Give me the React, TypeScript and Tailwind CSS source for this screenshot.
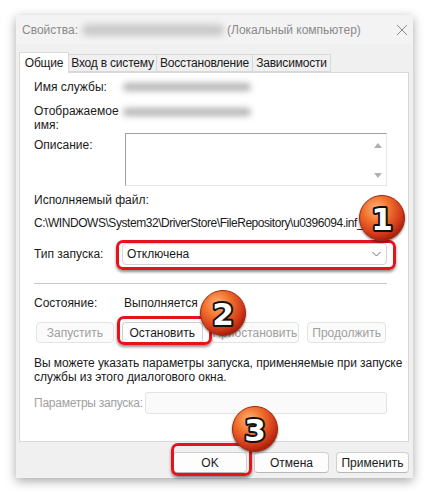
import React from "react";

const font = { fontFamily: '"Liberation Sans", Arial, sans-serif' };

function Blur({ w, className = "" }: { w: string; className?: string }) {
  return <div className={`h-[8px] rounded-full bg-[#b4b4b4] blur-[3px] ${w} ${className}`} />;
}

function Badge({ n, x, y }: { n: string; x: number; y: number }) {
  return (
    <svg
      width="52"
      height="52"
      viewBox="0 0 52 52"
      className="absolute"
      style={{ left: x - 26, top: y - 26 }}
    >
      <defs>
        <radialGradient id={`g${n}`} cx="38%" cy="30%" r="70%">
          <stop offset="0%" stopColor="#fcb680" />
          <stop offset="40%" stopColor="#f2742f" />
          <stop offset="80%" stopColor="#d3391a" />
          <stop offset="100%" stopColor="#a8220c" />
        </radialGradient>
        <filter id={`s${n}`} x="-20%" y="-20%" width="140%" height="140%">
          <feDropShadow dx="0" dy="1.5" stdDeviation="1.2" floodColor="#000" floodOpacity="0.45" />
        </filter>
      </defs>
      <circle cx="26" cy="26" r="22.5" fill={`url(#g${n})`} stroke="#9c2a12" strokeWidth="1" filter={`url(#s${n})`} />
      <text
        x="26"
        y="37.5"
        textAnchor="middle"
        fontFamily='"DejaVu Sans", sans-serif'
        fontWeight="bold"
        fontSize="31"
        fill="#fff"
        stroke="#111"
        strokeWidth="4"
        strokeLinejoin="round"
        paintOrder="stroke"
      >
        {n}
      </text>
    </svg>
  );
}

function Btn({ label, disabled, w }: { label: string; disabled?: boolean; w: string }) {
  return (
    <div
      className={`flex h-[21px] items-center justify-center whitespace-nowrap rounded-[4px] border text-[12px] ${w} ${
        disabled
          ? "border-[#e3e3e3] bg-[#fbfbfb] text-[#a0a0a0]"
          : "border-[#d0d0d0] border-b-[#b8b8b8] bg-[#fdfdfd] text-[#1a1a1a]"
      }`}
    >
      {label}
    </div>
  );
}

export default function App() {
  return (
    <div className="relative h-[494px] w-[431px] overflow-hidden whitespace-nowrap bg-white text-[12px] leading-[14px] text-[#1a1a1a]" style={font}>
      <div className="ml-[16px] mt-[15px] h-[463px] w-[397px] bg-[#f0f0f0] shadow-[0_3px_10px_rgba(0,0,0,0.35)]">
        {/* Title bar */}
        <div className="flex h-[29px] items-center bg-[#f3f3f3] pl-[6px] pr-[5px] text-[#8a8a8a]">
          <span>Свойства:</span>
          <Blur w="w-[142px]" className="ml-[4px] mr-[3px] h-[12px] bg-[#cacaca]" />
          <span>(Локальный компьютер)</span>
          <svg className="ml-auto" width="12" height="12" viewBox="0 0 12 12">
            <path d="M1 1 L11 11 M11 1 L1 11" stroke="#8c8c8c" strokeWidth="1" />
          </svg>
        </div>

        <div className="pl-[3px] pr-[4px]">
          {/* Tabs */}
          <div className="mt-[8px] flex h-[20px] items-end tracking-[-0.2px]">
            <div className="relative z-10 -mb-px flex h-[21px] w-[50px] items-center justify-center border border-b-0 border-[#d9d9d9] bg-white">
              Общие
            </div>
            <div className="flex h-[18px] w-[88px] items-center justify-center border border-l-0 border-[#d9d9d9] bg-[#f0f0f0]">
              Вход в систему
            </div>
            <div className="flex h-[18px] w-[96px] items-center justify-center border border-l-0 border-[#d9d9d9] bg-[#f0f0f0]">
              Восстановление
            </div>
            <div className="flex h-[18px] w-[78px] items-center justify-center border border-l-0 border-[#d9d9d9] bg-[#f0f0f0]">
              Зависимости
            </div>
          </div>

          {/* Panel */}
          <div className="h-[370px] overflow-hidden border border-[#d9d9d9] bg-white pl-[14px] pr-[21px]">
            <div className="mt-[7px] flex items-center">
              <div className="w-[89px]">Имя службы:</div>
              <Blur w="w-[128px]" />
            </div>
            <div className="mt-[10px] flex">
              <div className="w-[89px]">
                Отображаемое
                <br />
                имя:
              </div>
              <Blur w="w-[128px]" className="mt-[4px]" />
            </div>
            <div className="mt-[1px] flex">
              <div className="mt-[5px] w-[91px]">Описание:</div>
              <div className="relative h-[53px] flex-1 border border-[#a0a0a0] border-b-[#e6e6e6] border-r-[#e6e6e6] bg-white">
                <svg className="absolute right-[4px] top-[8px]" width="8" height="6" viewBox="0 0 8 6">
                  <path d="M0 6 L4 1 L8 6 Z" fill="#b0b0b0" />
                </svg>
                <svg className="absolute bottom-[6px] right-[4px]" width="8" height="6" viewBox="0 0 8 6">
                  <path d="M0 0 L4 5 L8 0 Z" fill="#b0b0b0" />
                </svg>
              </div>
            </div>
            <div className="mt-[7px]">Исполняемый файл:</div>
            <div className="mt-[9px] tracking-[-0.45px]">C:\WINDOWS\System32\DriverStore\FileRepository\u0396094.inf_a</div>
            <div className="mt-[13px] flex items-center">
              <div className="w-[88px]">Тип запуска:</div>
              <div className="flex h-[22px] flex-1 items-center rounded-[4px] border border-[#d4d4d4] bg-white pl-[4px] pr-[5px]">
                <span>Отключена</span>
                <svg className="ml-auto" width="9" height="6" viewBox="0 0 9 6">
                  <path d="M0.5 1 L4.5 5 L8.5 1" fill="none" stroke="#707070" strokeWidth="1" />
                </svg>
              </div>
            </div>
            <div className="mt-[18px] h-px bg-[#c8c8c8]" />
            <div className="mt-[12px] flex">
              <div className="w-[90px]">Состояние:</div>
              <div>Выполняется</div>
            </div>
            <div className="mt-[12px] flex gap-[8px] pl-[2px] pr-[1px]">
              <Btn label="Запустить" disabled w="w-[79px]" />
              <Btn label="Остановить" w="w-[82px]" />
              <Btn label="Приостановить" disabled w="w-[90px]" />
              <Btn label="Продолжить" disabled w="w-[80px]" />
            </div>
            <div className="mt-[13px] tracking-[-0.05px]">
              Вы можете указать параметры запуска, применяемые при запуске
              <br />
              службы из этого диалогового окна.
            </div>
            <div className="mt-[8px] flex items-center">
              <div className="w-[111px] tracking-[-0.25px] text-[#a0a0a0]">Параметры запуска:</div>
              <div className="h-[22px] flex-1 rounded-[3px] border border-[#e3e3e3] bg-[#fafafa]" />
            </div>
          </div>

          {/* Bottom buttons */}
          <div className="mt-[10px] flex justify-end gap-[7px]">
            <Btn label="OK" w="w-[74px]" />
            <Btn label="Отмена" w="w-[75px]" />
            <Btn label="Применить" w="w-[73px]" />
          </div>
        </div>
      </div>

      {/* Highlights */}
      <div className="absolute left-[116px] top-[240px] h-[30px] w-[280px] rounded-[7px] border-[3px] border-[#e5141b] shadow-[0_2px_3px_rgba(0,0,0,0.45)]" />
      <div className="absolute left-[117px] top-[316px] h-[29px] w-[95px] rounded-[7px] border-[3px] border-[#e5141b] shadow-[0_2px_3px_rgba(0,0,0,0.45)]" />
      <div className="absolute left-[171px] top-[443px] h-[33px] w-[81px] rounded-[7px] border-[3px] border-[#e5141b] shadow-[0_2px_3px_rgba(0,0,0,0.45)]" />

      <Badge n="1" x={382} y={218} />
      <Badge n="2" x={223} y={313} />
      <Badge n="3" x={255} y={429} />
    </div>
  );
}
